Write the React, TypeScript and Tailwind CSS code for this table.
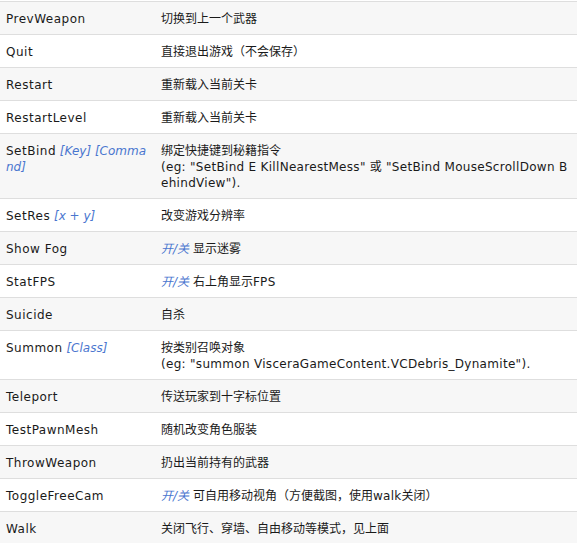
import React from "react";

type Row = {
  cmd: string;
  args?: string;
  toggle?: boolean;
  desc: React.ReactNode;
};

// latin runs are a bit wider in the original (Verdana-ish), so widen them slightly
const L = ({ children }: { children: React.ReactNode }) => (
  <span className="tracking-[0.3px]">{children}</span>
);

const rows: Row[] = [
  { cmd: "PrevWeapon", desc: "切换到上一个武器" },
  { cmd: "Quit", desc: "直接退出游戏（不会保存）" },
  { cmd: "Restart", desc: "重新载入当前关卡" },
  { cmd: "RestartLevel", desc: "重新载入当前关卡" },
  {
    cmd: "SetBind",
    args: "[Key] [Command]",
    desc: (
      <>
        绑定快捷键到秘籍指令
        <br />
        <L>(eg: "SetBind E KillNearestMess" </L>或<L> "SetBind MouseScrollDown BehindView").</L>
      </>
    ),
  },
  { cmd: "SetRes", args: "[x + y]", desc: "改变游戏分辨率" },
  { cmd: "Show Fog", toggle: true, desc: "显示迷雾" },
  { cmd: "StatFPS", toggle: true, desc: <>右上角显示<L>FPS</L></> },
  { cmd: "Suicide", desc: "自杀" },
  {
    cmd: "Summon",
    args: "[Class]",
    desc: (
      <>
        按类别召唤对象
        <br />
        <L>(eg: "summon VisceraGameContent.VCDebris_Dynamite").</L>
      </>
    ),
  },
  { cmd: "Teleport", desc: "传送玩家到十字标位置" },
  { cmd: "TestPawnMesh", desc: "随机改变角色服装" },
  { cmd: "ThrowWeapon", desc: "扔出当前持有的武器" },
  {
    cmd: "ToggleFreeCam",
    toggle: true,
    desc: <>可自用移动视角（方便截图，使用<L>walk</L>关闭）</>,
  },
  { cmd: "Walk", desc: "关闭飞行、穿墙、自由移动等模式，见上面" },
];

export default function App() {
  return (
    <div
      className="w-[577px] h-[543px] overflow-hidden bg-white pt-px"
      style={{ fontFamily: '"DejaVu Sans", "Noto Sans CJK SC", sans-serif' }}
    >
      <table className="w-full border-collapse table-fixed text-[12px] leading-4 text-[#1a1a1a]">
        <colgroup>
          <col className="w-[155px]" />
          <col />
        </colgroup>
        <tbody>
          {rows.map((r, i) => (
            <tr
              key={r.cmd}
              className={i % 2 === 0 ? "bg-[#f7f7f7]" : "bg-white"}
            >
              <td className="border-t border-[#dedede] px-1.5 pt-[9px] pb-[7px] align-top break-all">
                <span className="tracking-[0.5px]">{r.cmd}</span>
                {r.args && (
                  <>
                    {" "}
                    <i className="text-[#4a76cf]">{r.args}</i>
                  </>
                )}
              </td>
              <td className="border-t border-[#dedede] px-1.5 pt-[9px] pb-[7px] align-top break-all">
                {r.toggle && (
                  <>
                    <i className="text-[#4a76cf]">开/关</i>{" "}
                  </>
                )}
                {r.desc}
              </td>
            </tr>
          ))}
        </tbody>
      </table>
    </div>
  );
}
